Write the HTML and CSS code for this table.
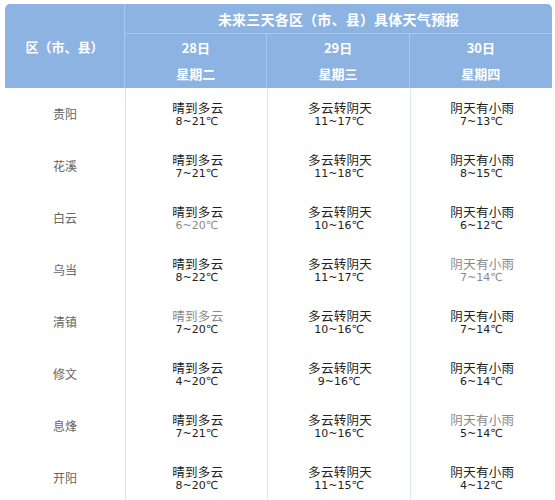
FILE: index.html
```html
<!DOCTYPE html>
<html lang="zh">
<head>
<meta charset="utf-8">
<link rel="stylesheet" href="styles.css">
</head>
<body>
<table class="forecast">
  <colgroup>
    <col class="c-name">
    <col class="c-day">
    <col class="c-day">
    <col class="c-day">
  </colgroup>
  <thead>
    <tr class="h1">
      <th rowspan="2" class="h-name">区（市、县）</th>
      <th colspan="3" class="h-title">未来三天各区（市、县）具体天气预报</th>
    </tr>
    <tr class="h2">
      <th><div>28日</div><div>星期二</div></th>
      <th><div>29日</div><div>星期三</div></th>
      <th class="last"><div>30日</div><div>星期四</div></th>
    </tr>
  </thead>
  <tbody>
    <tr>
      <td class="name">贵阳</td>
      <td><div class="w">晴到多云</div><div class="t">8~21℃</div></td>
      <td><div class="w">多云转阴天</div><div class="t">11~17℃</div></td>
      <td><div class="w">阴天有小雨</div><div class="t">7~13℃</div></td>
    </tr>
    <tr>
      <td class="name">花溪</td>
      <td><div class="w">晴到多云</div><div class="t">7~21℃</div></td>
      <td><div class="w">多云转阴天</div><div class="t">11~18℃</div></td>
      <td><div class="w">阴天有小雨</div><div class="t">8~15℃</div></td>
    </tr>
    <tr>
      <td class="name">白云</td>
      <td><div class="w">晴到多云</div><div class="t gray">6~20℃</div></td>
      <td><div class="w">多云转阴天</div><div class="t">10~16℃</div></td>
      <td><div class="w">阴天有小雨</div><div class="t">6~12℃</div></td>
    </tr>
    <tr>
      <td class="name">乌当</td>
      <td><div class="w">晴到多云</div><div class="t">8~22℃</div></td>
      <td><div class="w">多云转阴天</div><div class="t">11~17℃</div></td>
      <td><div class="w gray">阴天有小雨</div><div class="t gray">7~14℃</div></td>
    </tr>
    <tr>
      <td class="name">清镇</td>
      <td><div class="w gray">晴到多云</div><div class="t">7~20℃</div></td>
      <td><div class="w">多云转阴天</div><div class="t">10~16℃</div></td>
      <td><div class="w">阴天有小雨</div><div class="t">7~14℃</div></td>
    </tr>
    <tr>
      <td class="name">修文</td>
      <td><div class="w">晴到多云</div><div class="t">4~20℃</div></td>
      <td><div class="w">多云转阴天</div><div class="t">9~16℃</div></td>
      <td><div class="w">阴天有小雨</div><div class="t">6~14℃</div></td>
    </tr>
    <tr>
      <td class="name">息烽</td>
      <td><div class="w">晴到多云</div><div class="t">7~21℃</div></td>
      <td><div class="w">多云转阴天</div><div class="t">10~16℃</div></td>
      <td><div class="w gray">阴天有小雨</div><div class="t">5~14℃</div></td>
    </tr>
    <tr>
      <td class="name">开阳</td>
      <td><div class="w">晴到多云</div><div class="t">8~20℃</div></td>
      <td><div class="w">多云转阴天</div><div class="t">11~15℃</div></td>
      <td><div class="w">阴天有小雨</div><div class="t">4~12℃</div></td>
    </tr>
  </tbody>
</table>
</body>
</html>
```
FILE: styles.css
```css
html, body {
  margin: 0;
  padding: 0;
  background: #ffffff;
}
body {
  padding: 4px 3px 0 5px;
  font-family: "Noto Sans CJK SC", "DejaVu Sans", sans-serif;
}
.forecast {
  width: 547px;
  table-layout: fixed;
  border-collapse: separate;
  border-spacing: 0;
}
.c-name { width: 120px; }
.c-day { width: 142px; }
.forecast thead th {
  background: #8db3e2;
  color: #ffffff;
  font-weight: bold;
  padding: 0;
  text-align: center;
}
.h-name {
  font-size: 13px;
  border-top-left-radius: 5px;
  border-right: 1px solid #a9c8ef;
}
.h-title {
  height: 29px;
  font-size: 14px;
  letter-spacing: 0.2px;
  border-top-right-radius: 5px;
  border-bottom: 1px solid #a9c8ef;
}
.h2 th {
  height: 54px;
  font-size: 13px;
  line-height: 26px;
  border-right: 1px solid #a9c8ef;
}
.h2 th.last {
  border-right: none;
}
.forecast tbody td {
  height: 52px;
  padding: 0;
  text-align: center;
  vertical-align: middle;
  border-left: 1px solid #dbe9f1;
}
.forecast tbody td.name {
  border-left: none;
  font-size: 12px;
  line-height: 14px;
  color: #666666;
}
.forecast tbody tr td:nth-child(2) {
  border-left: 1px solid #d5e6f0;
}
.w {
  font-size: 12.5px;
  line-height: 15px;
  letter-spacing: 0.3px;
  color: #222222;
  padding-left: 2px;
}
.t {
  font-family: "DejaVu Sans", "Noto Sans CJK SC", sans-serif;
  font-size: 11px;
  line-height: 14px;
  color: #222222;
}
.gray {
  color: #8a8a8a;
}
```
